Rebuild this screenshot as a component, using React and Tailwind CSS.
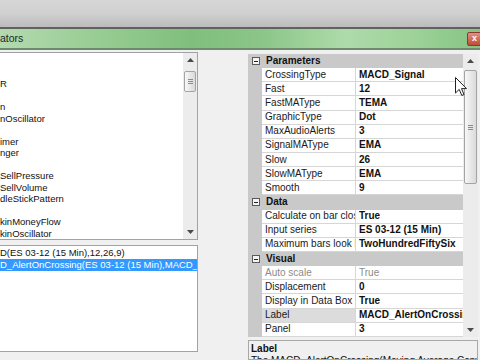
import React from "react";

const leftItems = ["", "", "R", "", "n", "nOscillator", "", "imer", "nger", "", "SellPressure", "SellVolume", "dleStickPattern", "", "kinMoneyFlow", "kinOscillator", ""];

const rows = [
  { cat: "Parameters" },
  { n: "CrossingType", v: "MACD_Signal" },
  { n: "Fast", v: "12" },
  { n: "FastMAType", v: "TEMA" },
  { n: "GraphicType", v: "Dot" },
  { n: "MaxAudioAlerts", v: "3" },
  { n: "SignalMAType", v: "EMA" },
  { n: "Slow", v: "26" },
  { n: "SlowMAType", v: "EMA" },
  { n: "Smooth", v: "9" },
  { cat: "Data" },
  { n: "Calculate on bar close", v: "True" },
  { n: "Input series", v: "ES 03-12 (15 Min)" },
  { n: "Maximum bars look back", v: "TwoHundredFiftySix" },
  { cat: "Visual" },
  { n: "Auto scale", v: "True", dis: true },
  { n: "Displacement", v: "0" },
  { n: "Display in Data Box", v: "True" },
  { n: "Label", v: "MACD_AlertOnCrossing", sel: true },
  { n: "Panel", v: "3" },
];

function Up() {
  return (
    <svg width="7" height="4" viewBox="0 0 7 4"><path d="M0 4 L3.5 0 L7 4 Z" fill="#4a4a4a" /></svg>
  );
}
function Down() {
  return (
    <svg width="7" height="4" viewBox="0 0 7 4"><path d="M0 0 L3.5 4 L7 0 Z" fill="#4a4a4a" /></svg>
  );
}

function VScroll({ thumbTop, thumbH }) {
  return (
    <div className="flex h-full w-full flex-col bg-[#ececec]">
      <div className="flex h-[14px] items-center justify-center"><Up /></div>
      <div className="flex flex-1 flex-col">
        <div style={{ marginTop: thumbTop, height: thumbH }} className="mx-[1px] flex items-center justify-center rounded-[2px] border border-[#a4a4a4] bg-gradient-to-r from-[#f7f7f7] to-[#dadada]">
          <div className="flex flex-col gap-[1px]">
            <div className="h-[1px] w-[5px] bg-[#8a8a8a]" />
            <div className="h-[1px] w-[5px] bg-[#8a8a8a]" />
            <div className="h-[1px] w-[5px] bg-[#8a8a8a]" />
          </div>
        </div>
      </div>
      <div className="flex h-[14px] items-center justify-center"><Down /></div>
    </div>
  );
}

function Minus() {
  return (
    <div className="flex h-[8px] w-[8px] items-center justify-center border border-[#5a5a5a] bg-[#f4f4f4]">
      <div className="h-[1px] w-[4px] bg-[#222]" />
    </div>
  );
}

export default function App() {
  return (
    <div className="relative h-[360px] w-[480px] overflow-hidden bg-[#f0f0f0] font-['Liberation_Sans',Arial,sans-serif] text-[#111]">
      {/* desktop */}
      <div className="h-[27px] bg-gradient-to-b from-[#d6d6d6] via-[#d0d0d0] to-[#bcbcbc]" />
      <div className="h-[2px] bg-[#5f625f]" />
      {/* title bar */}
      <div className="flex h-[19px] items-center justify-between bg-[linear-gradient(90deg,#b4dab0_0%,#9fd09a_15%,#7fbf7c_40%,#8cc689_55%,#aedbaa_72%,#9fd39a_85%,#86c483_100%)]">
        <span className="pl-0 text-[10.5px] leading-none text-[#1c2a1c]">ators</span>
        <div className="mr-[-2px] flex h-[14px] w-[15px] items-center justify-center rounded-[2px] border border-[#8a3a30] bg-gradient-to-b from-[#e09080] to-[#c24a38] text-[9px] font-bold leading-none text-white">x</div>
      </div>
      <div className="h-[2px] bg-[#6f8a6c]" />
      {/* body */}
      <div className="flex h-[310px]">
        {/* left column */}
        <div className="flex w-[198px] flex-col">
          <div className="mt-[2px] flex h-[188px] border-y border-r border-[#9ea3aa] bg-white">
            <div className="flex-1 overflow-hidden pt-[2px]">
              {leftItems.map((t, i) => (
                <div key={i} className="h-[11.5px] whitespace-nowrap text-[9.5px] leading-[11.5px]">{t}</div>
              ))}
            </div>
            <div className="w-[14px]">
              <VScroll thumbTop={4} thumbH={21} />
            </div>
          </div>
          <div className="mt-[5px] h-[107px] overflow-hidden border-y border-r border-[#9ea3aa] bg-white pt-[1px]">
            <div className="h-[12px] whitespace-nowrap text-[9.5px] leading-[12px]">D(ES 03-12 (15 Min),12,26,9)</div>
            <div className="h-[12px] overflow-hidden whitespace-nowrap bg-[#3399ff] text-[9.5px] leading-[12px] text-white">D_AlertOnCrossing(ES 03-12 (15 Min),MACD_Signal,12,TEMA)</div>
          </div>
        </div>
        <div className="w-[50px]" />
        {/* property grid */}
        <div className="flex w-[230px] flex-col">
          <div className="mt-[4px] flex h-[283px]">
            <div className="w-[215px]">
              {rows.map((r, i) =>
                r.cat ? (
                  <div key={i} className="flex h-[14.15px] items-center bg-[#c9c9c9]">
                    <div className="flex w-[14px] items-center justify-center pl-[1px]"><Minus /></div>
                    <span className="pl-[4px] text-[10px] font-bold leading-none">{r.cat}</span>
                  </div>
                ) : (
                  <div key={i} className="flex h-[14.15px]">
                    <div className="w-[14px] bg-[#c9c9c9]" />
                    <div className={`flex w-[94px] items-center overflow-hidden whitespace-nowrap border-b border-r border-[#d6d6d6] pl-[3px] text-[10px] leading-none ${r.sel ? "bg-[#dcdcdc]" : "bg-white"} ${r.dis ? "text-[#8c8c8c]" : "text-[#1a1a1a]"}`}>{r.n}</div>
                    <div className={`flex flex-1 items-center overflow-hidden whitespace-nowrap border-b border-[#d6d6d6] bg-white pl-[3px] text-[10px] leading-none ${r.dis ? "font-normal text-[#8c8c8c]" : "font-bold text-[#111]"}`}>{r.v}</div>
                  </div>
                )
              )}
            </div>
            <div className="w-[15px]">
              <VScroll thumbTop={2} thumbH={114} />
            </div>
          </div>
          <div className="mt-[3px] h-[30px] overflow-hidden border border-[#a8a8a8] bg-[#f0f0f0] px-[2px] pt-[2px]">
            <div className="text-[10px] font-bold leading-[12px]">Label</div>
            <div className="whitespace-nowrap text-[10px] leading-[12px]">The MACD_AlertOnCrossing(Moving Average Convergence/Divergence)</div>
          </div>
        </div>
      </div>
      {/* mouse cursor */}
      <svg className="absolute left-[455px] top-[77px]" width="13" height="20" viewBox="0 0 13 20">
        <path d="M0.5 0.5 L0.5 16 L4.2 12.4 L6.8 18.5 L9 17.6 L6.5 11.6 L11.5 11.6 Z" fill="white" stroke="#222" strokeWidth="1" />
      </svg>
    </div>
  );
}
